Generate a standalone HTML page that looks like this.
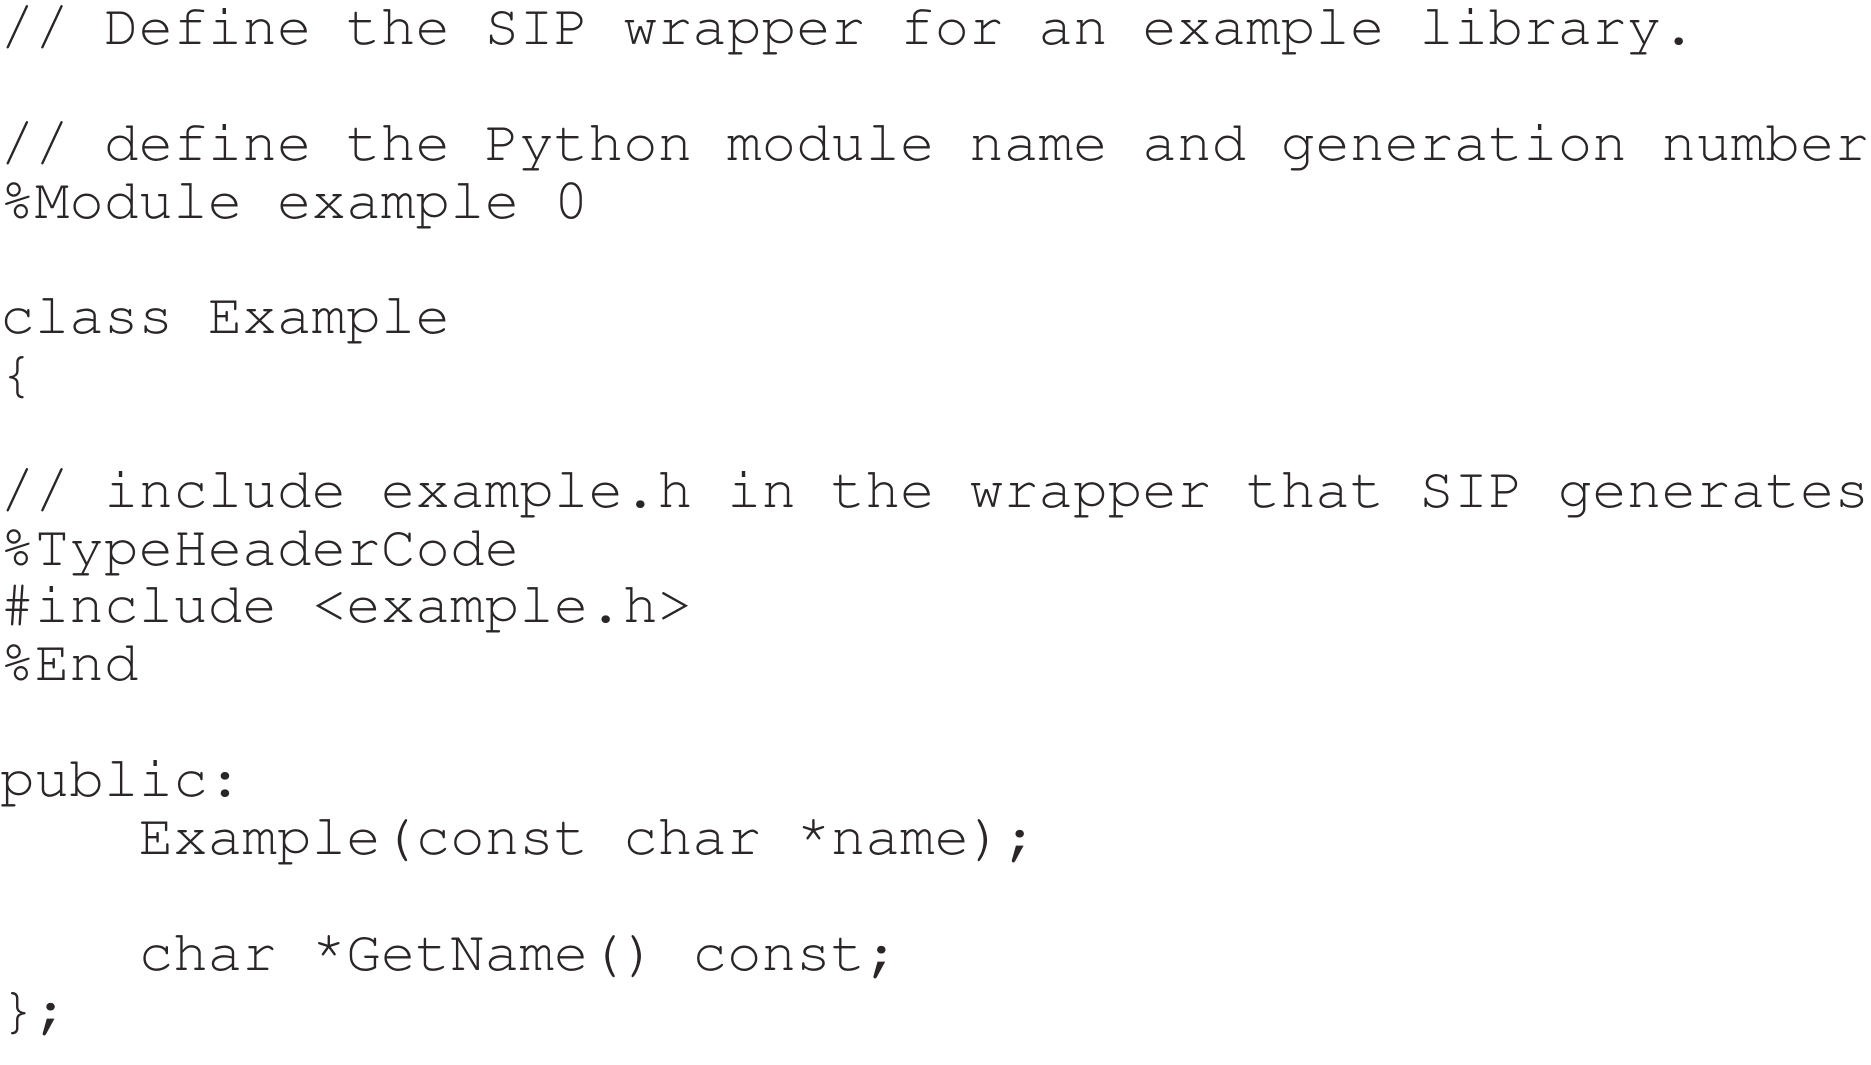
<!DOCTYPE html>
<html><head><meta charset="utf-8"><style>
html,body{margin:0;padding:0;background:#fff;width:1871px;height:1065px;overflow:hidden}
pre{margin:0;padding:0;position:relative;top:-1px;font-family:"Nimbus Mono PS","Nimbus Mono L","FreeMono","Courier New","Liberation Mono",monospace;font-size:57.7px;line-height:57.85px;color:#2a2627;white-space:pre}
</style></head><body><pre>// Define the SIP wrapper for an example library.

// define the Python module name and generation number
%Module example 0

class Example
{

// include example.h in the wrapper that SIP generates
%TypeHeaderCode
#include &lt;example.h&gt;
%End

public:
    Example(const char *name);

    char *GetName() const;
};</pre></body></html>
